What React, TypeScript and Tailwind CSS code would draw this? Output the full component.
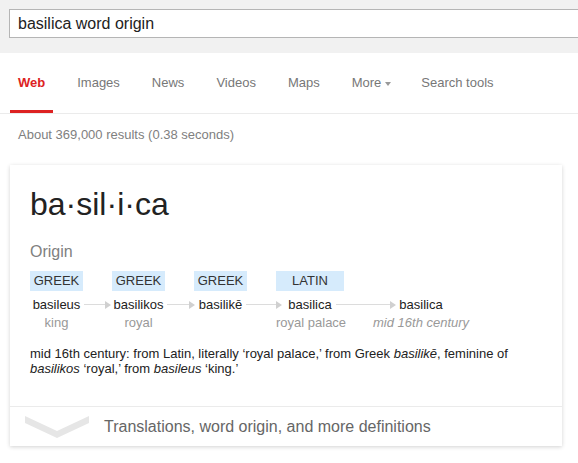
import React from 'react';

type Step = {
  lang?: string;
  word: string;
  gloss?: string;
  italicGloss?: boolean;
  col: string;
  arrow?: string;
};

const steps: Step[] = [
  { lang: 'GREEK', word: 'basileus', gloss: 'king', col: 'w-[53px]', arrow: 'w-[27px]' },
  { lang: 'GREEK', word: 'basilikos', gloss: 'royal', col: 'w-[53px]', arrow: 'w-[28px]' },
  { lang: 'GREEK', word: 'basilikē', col: 'w-[53px]', arrow: 'w-[36px]' },
  { lang: 'LATIN', word: 'basilica', gloss: 'royal palace', col: 'w-[68px]', arrow: 'w-[60px]' },
  { word: 'basilica', gloss: 'mid 16th century', italicGloss: true, col: 'w-[96px]' },
];

const tabs = ['Images', 'News', 'Videos', 'Maps'];

const Arrow: React.FC<{ width: string }> = ({ width }) => (
  <span className={`absolute left-full top-1/2 ml-[4px] flex -translate-y-1/2 items-center ${width}`}>
    <span className="h-px flex-1 bg-[#dcdcdc]" />
    <span className="h-0 w-0 border-y-[4px] border-l-[6px] border-y-transparent border-l-[#d0d0d0]" />
  </span>
);

export default function App() {
  return (
    <div className="min-h-[463px] w-[578px] overflow-hidden bg-white font-['Liberation_Sans',Arial,sans-serif] text-[#222]">
      {/* search bar */}
      <div className="h-[53px] bg-[#f1f1f1] pl-[9px] pt-[9px]">
        <div className="flex h-[29px] w-[600px] items-center border border-[#b5b5b5] bg-white pl-[8px] text-[16px] text-[#222]">
          basilica word origin
        </div>
      </div>

      {/* tabs */}
      <div className="flex h-[61px] items-start border-b border-[#ebebeb] pl-[10px] text-[13px] leading-4">
        <span className="border-b-[3px] border-[#dd2222] px-[8px] pb-[19px] pt-[22px] font-bold text-[#dd2222]">
          Web
        </span>
        <div className="ml-[24px] flex gap-[32px] pt-[22px] text-[#777]">
          {tabs.map(t => (
            <span key={t}>{t}</span>
          ))}
          <span className="flex items-center">
            More
            <span className="ml-[4px] mt-px h-0 w-0 border-x-[3.5px] border-t-[4px] border-x-transparent border-t-[#999]" />
          </span>
          <span className="ml-[-2px]">Search tools</span>
        </div>
      </div>

      <div className="pl-[18px] pt-[13px] text-[13px] leading-4 text-[#808080]">
        About 369,000 results (0.38 seconds)
      </div>

      {/* dictionary card */}
      <div className="ml-[10px] mt-[22px] w-[552px] bg-white shadow-[0_1px_4px_rgba(0,0,0,0.18)]">
        <div className="px-[20px] pb-[30px] pt-[21px]">
          <div className="text-[32px] leading-[37px] text-[#222]">ba·sil·i·ca</div>
          <div className="mt-[19px] text-[16px] leading-5 text-[#808080]">Origin</div>

          <div className="mt-[9px] flex gap-[29px] text-[13px]">
            {steps.map((s, i) => (
              <div key={i} className={`flex flex-col items-stretch text-center ${s.col}`}>
                <div className={`h-[20px] leading-[20px] text-[#333] ${s.lang ? 'bg-[#d6ebfc]' : ''}`}>
                  {s.lang}
                </div>
                <div className="mt-[5px] leading-[18px] text-[#222]">
                  <span className="relative">
                    {s.word}
                    {s.arrow && <Arrow width={s.arrow} />}
                  </span>
                </div>
                <div className={`h-[18px] whitespace-nowrap leading-[18px] text-[#999] ${s.italicGloss ? 'italic' : ''}`}>
                  {s.gloss}
                </div>
              </div>
            ))}
          </div>

          <p className="mt-[14px] text-[13px] leading-[15px] text-[#222]">
            mid 16th century: from Latin, literally ‘royal palace,’ from Greek <i>basilikē</i>, feminine of
            <br />
            <i>basilikos</i> ‘royal,’ from <i>basileus</i> ‘king.’
          </p>
        </div>

        <div className="flex h-[40px] items-center border-t border-[#ebebeb]">
          <svg width="64" height="22" viewBox="0 0 64 22" className="ml-[15px]">
            <polygon points="0,0 32,15 64,0 64,7 32,22 0,7" fill="#e6e6e6" />
          </svg>
          <span className="ml-[15px] text-[16px] text-[#666]">
            Translations, word origin, and more definitions
          </span>
        </div>
      </div>
    </div>
  );
}
